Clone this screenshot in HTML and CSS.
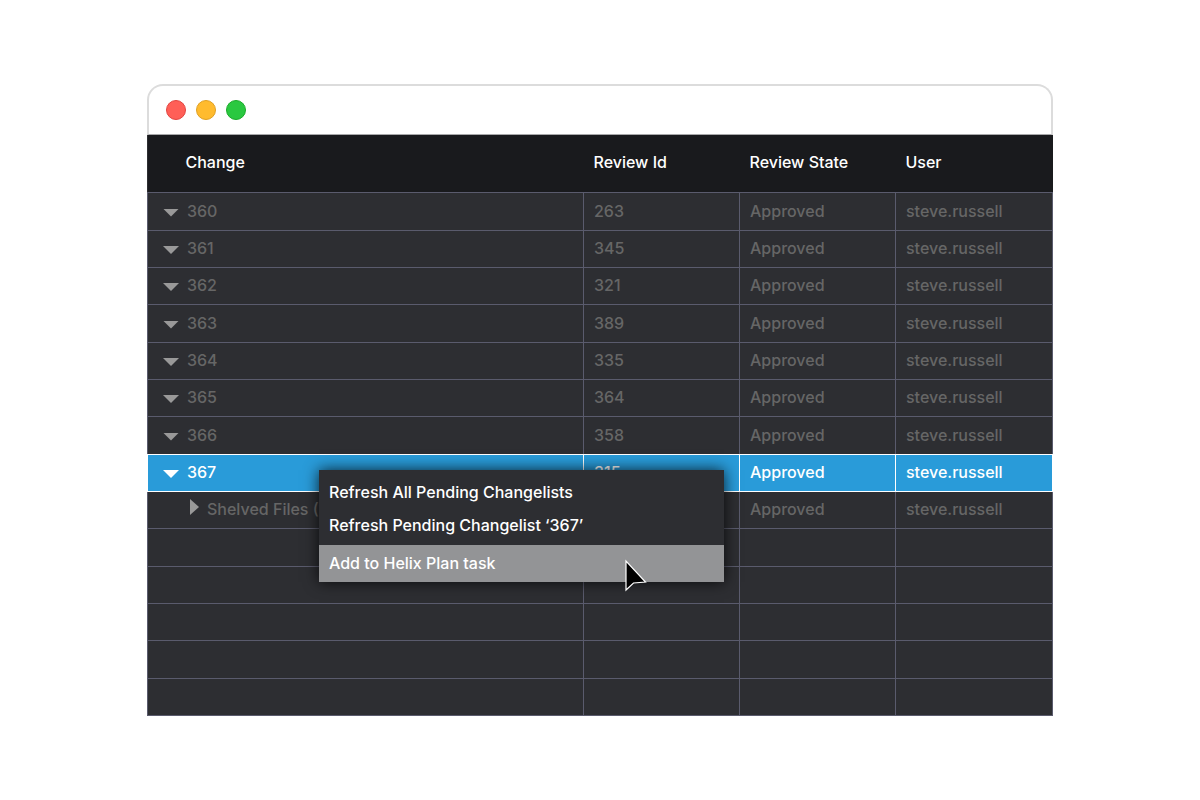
FILE: index.html
```html
<!DOCTYPE html>
<html lang="en">
<head>
  <meta charset="UTF-8">
  <meta name="viewport" content="width=device-width, initial-scale=1.0">
  <title>Pending Changelists</title>
  <link rel="stylesheet" href="styles.css">
</head>
<body>
  <div class="window">
    <div class="titlebar">
      <span class="dot red"></span>
      <span class="dot yellow"></span>
      <span class="dot green"></span>
    </div>

    <table class="changes">
      <colgroup>
        <col>
        <col class="col-small">
        <col class="col-small">
        <col class="col-small">
      </colgroup>
      <thead>
        <tr><th>Change</th><th>Review Id</th><th>Review State</th><th>User</th></tr>
      </thead>
      <tbody>
        <tr><td><button class="toggle" aria-label="Collapse 360"></button>360</td><td>263</td><td>Approved</td><td>steve.russell</td></tr>
        <tr><td><button class="toggle" aria-label="Collapse 361"></button>361</td><td>345</td><td>Approved</td><td>steve.russell</td></tr>
        <tr><td><button class="toggle" aria-label="Collapse 362"></button>362</td><td>321</td><td>Approved</td><td>steve.russell</td></tr>
        <tr><td><button class="toggle" aria-label="Collapse 363"></button>363</td><td>389</td><td>Approved</td><td>steve.russell</td></tr>
        <tr><td><button class="toggle" aria-label="Collapse 364"></button>364</td><td>335</td><td>Approved</td><td>steve.russell</td></tr>
        <tr><td><button class="toggle" aria-label="Collapse 365"></button>365</td><td>364</td><td>Approved</td><td>steve.russell</td></tr>
        <tr class="before-selected"><td><button class="toggle" aria-label="Collapse 366"></button>366</td><td>358</td><td>Approved</td><td>steve.russell</td></tr>
        <tr class="selected"><td><button class="toggle" aria-label="Collapse 367"></button>367</td><td>315</td><td>Approved</td><td>steve.russell</td></tr>
        <tr class="child"><td><button class="toggle closed" aria-label="Expand shelved files"></button>Shelved Files (1)</td><td></td><td>Approved</td><td>steve.russell</td></tr>
        <tr><td></td><td></td><td></td><td></td></tr>
        <tr><td></td><td></td><td></td><td></td></tr>
        <tr><td></td><td></td><td></td><td></td></tr>
        <tr><td></td><td></td><td></td><td></td></tr>
        <tr><td></td><td></td><td></td><td></td></tr>
      </tbody>
    </table>

    <!-- Context menu -->
    <div class="menu">
      <button class="menu-item">Refresh All Pending Changelists</button>
      <button class="menu-item">Refresh Pending Changelist ‘367’</button>
      <button class="menu-item active">Add to Helix Plan task</button>
      <svg class="cursor" width="24" height="34" viewBox="0 0 24 34">
        <path d="M2 2 L2 31 L9.500 24 L21.500 23 Z" fill="#000" stroke="#fff" stroke-width="1.200"/>
      </svg>
    </div>
  </div>
</body>
</html>
```

FILE: styles.css
```css
* {
  box-sizing: border-box;
}
body {
  margin: 0;
  padding: 84px 147px;
  background: #fff;
  font-family: Inter, "Liberation Sans", sans-serif;
  font-size: 16px;
  font-weight: 500;
  line-height: 20px;
}
button {
  font: inherit;
  border: none;
  cursor: pointer;
}
.window {
  position: relative;
}
.titlebar {
  display: flex;
  align-items: center;
  gap: 10px;
  height: 51px;
  padding: 0 17px;
  border: 2px solid #dcdcdc;
  border-bottom: 1px solid #a8a8aa;
  border-radius: 16px 16px 0 0;
}
.dot {
  width: 20px;
  height: 20px;
  border-radius: 50%;
  border: 1px solid;
}
.red {
  background: #ff5f57;
  border-color: #e2443f;
}
.yellow {
  background: #ffbb2e;
  border-color: #dfa023;
}
.green {
  background: #2ac840;
  border-color: #1aab29;
}
.changes {
  width: 100%;
  table-layout: fixed;
  border-collapse: collapse;
  background: #2d2e32;
  color: #666;
}
.col-small {
  width: 156px;
}
.col-small:last-child {
  width: 157px;
}
.changes th {
  height: 57px;
  padding: 0 10px 2px;
  background: #191a1d;
  color: #fff;
  font-weight: 500;
  text-align: left;
}
.changes th:first-child {
  padding-left: 38px;
}
.changes td {
  height: 37px;
  padding: 0 10px 1px;
  border: 1px solid #5a5b6d;
}
.changes tr:nth-child(3n+1) td {
  height: 38px;
}
.changes td:first-child {
  padding-left: 15px;
}
.changes .child td:first-child {
  padding-left: 42px;
}
.changes .before-selected td {
  border-bottom-color: #fff;
}
.changes .selected td {
  background: #299bd9;
  border-color: #fff;
  color: #fff;
}
.toggle {
  width: 16px;
  height: 8px;
  margin-right: 8px;
  padding: 0;
  background: #999;
  clip-path: polygon(0 0, 100% 0, 50% 100%);
}
.toggle.closed {
  width: 9px;
  height: 16px;
  clip-path: polygon(0 0, 100% 50%, 0 100%);
}
.selected .toggle {
  background: #fff;
}
.menu {
  position: absolute;
  top: 386px;
  left: 172px;
  display: flex;
  flex-direction: column;
  width: 405px;
  padding-top: 6px;
  background: #2d2e32;
  box-shadow: 0 0 14px rgba(0, 0, 0, 0.8);
}
.menu-item {
  padding: 6px 10px 7px;
  background: none;
  color: #fff;
  text-align: left;
}
.menu-item.active {
  margin-top: 3px;
  padding: 8px 10px 9px;
  background: #939496;
}
.cursor {
  position: absolute;
  top: 89px;
  left: 305px;
}
```
